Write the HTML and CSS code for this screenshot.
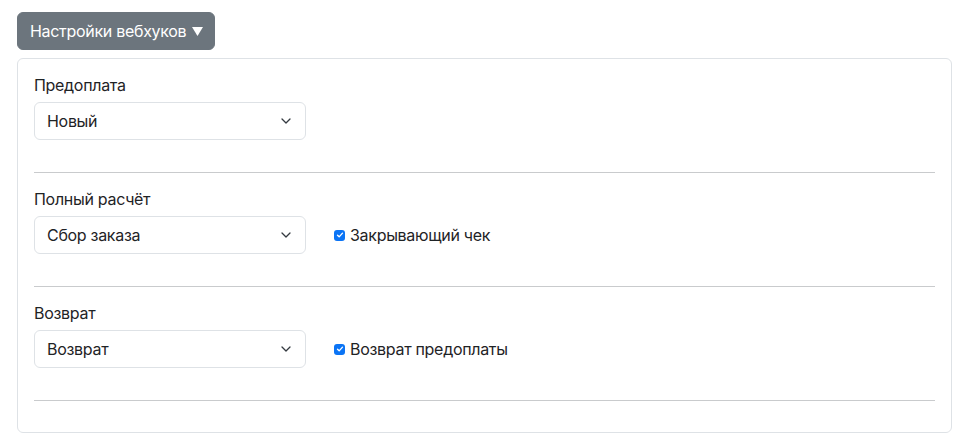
FILE: index.html
```html
<!DOCTYPE html>
<html lang="ru">
<head>
<meta charset="utf-8">
<title>Настройки вебхуков</title>
<link rel="stylesheet" href="styles.css">
</head>
<body>
<div class="page">
  <button class="toggle-btn" type="button">Настройки вебхуков<svg class="tri" viewBox="0 0 11 9" width="11" height="9"><path d="M0 0h11L5.5 9z" fill="#fff"/></svg></button>
  <div class="card">
    <div class="card-body">
      <div class="section">
        <label class="field-label">Предоплата</label>
        <div class="row">
          <div class="select"><span>Новый</span>
            <svg class="chev" viewBox="0 0 10 6" width="10" height="6"><path d="M1 1l4 4 4-4" fill="none" stroke="#343a40" stroke-width="1.3" stroke-linecap="round" stroke-linejoin="round"/></svg>
          </div>
        </div>
        <hr class="divider">
      </div>
      <div class="section">
        <label class="field-label">Полный расчёт</label>
        <div class="row">
          <div class="select"><span>Сбор заказа</span>
            <svg class="chev" viewBox="0 0 10 6" width="10" height="6"><path d="M1 1l4 4 4-4" fill="none" stroke="#343a40" stroke-width="1.3" stroke-linecap="round" stroke-linejoin="round"/></svg>
          </div>
          <label class="check">
            <span class="box"><svg viewBox="0 0 12 12" width="12" height="12"><path d="M3 6.2l2 2 4-4.4" fill="none" stroke="#fff" stroke-width="1.6" stroke-linecap="round" stroke-linejoin="round"/></svg></span>
            <span>Закрывающий чек</span>
          </label>
        </div>
        <hr class="divider">
      </div>
      <div class="section">
        <label class="field-label">Возврат</label>
        <div class="row">
          <div class="select"><span>Возврат</span>
            <svg class="chev" viewBox="0 0 10 6" width="10" height="6"><path d="M1 1l4 4 4-4" fill="none" stroke="#343a40" stroke-width="1.3" stroke-linecap="round" stroke-linejoin="round"/></svg>
          </div>
          <label class="check">
            <span class="box"><svg viewBox="0 0 12 12" width="12" height="12"><path d="M3 6.2l2 2 4-4.4" fill="none" stroke="#fff" stroke-width="1.6" stroke-linecap="round" stroke-linejoin="round"/></svg></span>
            <span>Возврат предоплаты</span>
          </label>
        </div>
        <hr class="divider">
      </div>
    </div>
  </div>
</div>
</body>
</html>
```
FILE: styles.css
```css
html, body {
  margin: 0;
  padding: 0;
  background: #fff;
}
body {
  font-family: Inter, "Liberation Sans", Arial, sans-serif;
  font-size: 16px;
  line-height: 24px;
  letter-spacing: -0.3px;
  color: #1f2326;
}
.page {
  padding: 12px 23px 0 17px;
}
.toggle-btn {
  display: flex;
  align-items: center;
  height: 38px;
  padding: 0 11px 0 12px;
  border: 1px solid #6c757d;
  border-radius: 6px;
  background: #6c757d;
  color: #fff;
  font-family: inherit;
  font-size: 16px;
  line-height: 24px;
  letter-spacing: -0.3px;
  cursor: pointer;
}
.tri {
  width: 11px;
  height: 9px;
  margin-left: 6px;
  margin-top: 1px;
}
.card {
  margin-top: 8px;
  border: 1px solid #dee2e6;
  border-radius: 6px;
}
.card-body {
  padding: 14px 16px 17px;
}
.field-label {
  display: block;
  margin-bottom: 5px;
}
.row {
  display: flex;
  align-items: center;
}
.select {
  box-sizing: border-box;
  width: 272px;
  height: 38px;
  border: 1px solid #dee2e6;
  border-radius: 6px;
  padding: 0 12px;
  display: flex;
  align-items: center;
  justify-content: space-between;
}
.chev {
  width: 10px;
  height: 6px;
  margin-right: 2px;
}
.check {
  display: flex;
  align-items: center;
  margin-left: 28px;
  gap: 5px;
}
.box {
  width: 11px;
  height: 11px;
  border-radius: 3px;
  background: #0b74f5;
  display: flex;
  align-items: center;
  justify-content: center;
}
.box svg {
  width: 10px;
  height: 10px;
}
.divider {
  margin: 32px 0 14px;
  border: 0;
  border-top: 1px solid #c9cbcd;
}
```
